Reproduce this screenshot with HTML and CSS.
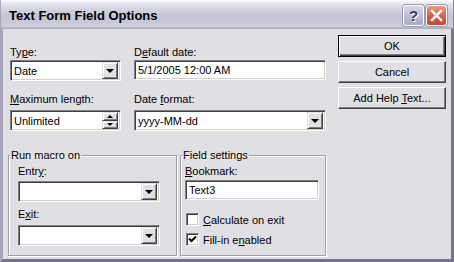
FILE: index.html
```html
<!DOCTYPE html>
<html lang="en">
<head>
    <meta charset="UTF-8">
    <title>Text Form Field Options</title>
    <link rel="stylesheet" href="styles.css">
</head>
<body>
    <div class="window">
        <!-- Title bar -->
        <div class="titlebar">
            <span class="title">Text Form Field Options</span>
            <div class="title-buttons">
                <span class="tb-btn help">?</span>
                <span class="tb-btn close">
                    <svg width="19" height="19" viewBox="0 0 19 19"><path d="M5 5 L14 14 M14 5 L5 14" stroke="#fff" stroke-width="2.4" stroke-linecap="square"/></svg>
                </span>
            </div>
        </div>

        <!-- Dialog body -->
        <div class="client">
            <div class="main">
                <div class="field-row first">
                    <div class="field narrow">
                        <div class="label">Ty<u>p</u>e:</div>
                        <div class="box combo"><span class="value">Date</span><span class="drop"><i class="tri down"></i></span></div>
                    </div>
                    <div class="field wide">
                        <div class="label">D<u>e</u>fault date:</div>
                        <div class="box text"><span class="value">5/1/2005 12:00 AM</span></div>
                    </div>
                </div>
                <div class="field-row second">
                    <div class="field narrow">
                        <div class="label"><u>M</u>aximum length:</div>
                        <div class="box combo"><span class="value">Unlimited</span>
                            <span class="spin">
                                <span class="spin-btn"><i class="tri up small"></i></span>
                                <span class="spin-btn"><i class="tri down small"></i></span>
                            </span>
                        </div>
                    </div>
                    <div class="field wide">
                        <div class="label">Date <u>f</u>ormat:</div>
                        <div class="box combo"><span class="value">yyyy-MM-dd</span><span class="drop"><i class="tri down"></i></span></div>
                    </div>
                </div>

                <div class="groups">
                    <fieldset class="group macro">
                        <legend>Run macro on</legend>
                        <div class="group-body">
                            <div class="label">Entr<u>y</u>:</div>
                            <div class="box combo"><span class="value"></span><span class="drop"><i class="tri down"></i></span></div>
                            <div class="label exit-label">E<u>x</u>it:</div>
                            <div class="box combo"><span class="value"></span><span class="drop"><i class="tri down"></i></span></div>
                        </div>
                    </fieldset>
                    <fieldset class="group settings">
                        <legend>Field settings</legend>
                        <div class="group-body">
                            <div class="label"><u>B</u>ookmark:</div>
                            <div class="box text"><span class="value">Text3</span></div>
                            <div class="check-row first-check">
                                <span class="checkbox"></span>
                                <span><u>C</u>alculate on exit</span>
                            </div>
                            <div class="check-row">
                                <span class="checkbox">
                                    <svg width="9" height="9" viewBox="0 0 9 9"><path d="M1 3.5 L3.5 6 L8 1.5" fill="none" stroke="#000" stroke-width="2"/></svg>
                                </span>
                                <span>Fill-in e<u>n</u>abled</span>
                            </div>
                        </div>
                    </fieldset>
                </div>
            </div>

            <div class="buttons">
                <div class="btn default"><span>OK</span></div>
                <div class="btn"><span>Cancel</span></div>
                <div class="btn"><span>Add Help <u>T</u>ext...</span></div>
            </div>
        </div>
    </div>
</body>
</html>
```

FILE: styles.css
```css
* {
    box-sizing: border-box;
}

body {
    margin: 0;
    font-family: "Liberation Sans", Arial, sans-serif;
    font-size: 11px;
    color: #000;
    background: #e0dfe3;
}

.window {
    width: 454px;
    height: 262px;
    display: flex;
    flex-direction: column;
}

/* Title bar */
.titlebar {
    height: 29px;
    flex: none;
    display: flex;
    align-items: center;
    justify-content: space-between;
    padding: 0 6px 0 8px;
    background: linear-gradient(#fdfdfe 0%, #e6e6ee 12%, #d6d6e2 30%, #c4c4d4 55%, #c8c8d8 78%, #d0d0dc 90%, #a4a4ba 100%);
    border-left: 1px solid #a8a8b8;
    border-right: 1px solid #8a88a4;
}

.title {
    font-weight: bold;
    font-size: 13px;
    margin-top: 1px;
}

.title-buttons {
    display: flex;
    gap: 2px;
    margin-top: 1px;
}

.tb-btn {
    width: 21px;
    height: 21px;
    border-radius: 3px;
    display: flex;
    align-items: center;
    justify-content: center;
    border: 1px solid #fff;
    box-shadow: 0 0 0 1px #9a9ab0;
}

.tb-btn.help {
    background: linear-gradient(#d8d8e6, #a8a8c4);
    font-weight: bold;
    font-size: 15px;
    color: #3c3c58;
    text-shadow: 1px 1px 0 #fff;
}

.tb-btn.close {
    background: linear-gradient(#ec9a88, #d25c46 60%, #c24830);
}

/* Client area */
.client {
    flex: 1;
    display: flex;
    background: #e0dfe3;
    border-left: 3px solid #a6a5bc;
    border-right: 3px solid #75738f;
    border-bottom: 3px solid #75738f;
    padding-left: 5px;
}

.main {
    width: 318px;
    padding-top: 17px;
}

.field-row {
    display: flex;
    gap: 13px;
    margin-left: 2px;
    align-items: flex-start;
}

.field-row.second {
    margin-top: 12px;
}

.field-row.second .label {
    margin-bottom: 4px;
}

.field.narrow {
    width: 111px;
}

.field.wide {
    width: 192px;
}

.label {
    line-height: 13px;
    height: 13px;
    margin-bottom: 1px;
    white-space: nowrap;
}

/* Sunken controls */
.box {
    height: 21px;
    background: #fff;
    border: 1px solid;
    border-color: #808080 #fff #fff #808080;
    box-shadow: inset 1px 1px #404040, inset -1px -1px #d4d0c8;
    display: flex;
    align-items: center;
    padding: 2px;
}

.box.text {
    height: 20px;
}

.box .value {
    flex: 1;
    padding-left: 1px;
    white-space: nowrap;
}

.drop,
.spin-btn {
    background: #e0dfe3;
    border: 1px solid;
    border-color: #e0dfe3 #404040 #404040 #e0dfe3;
    box-shadow: inset 1px 1px #fff, inset -1px -1px #808080;
    display: flex;
    align-items: center;
    justify-content: center;
}

.drop {
    width: 16px;
    height: 17px;
}

.spin {
    width: 16px;
    height: 17px;
    display: flex;
    flex-direction: column;
}

.spin-btn {
    flex: 1;
}

.tri {
    width: 0;
    height: 0;
    border-left: 4px solid transparent;
    border-right: 4px solid transparent;
}

.tri.down {
    border-top: 4px solid #000;
}

.tri.up {
    border-bottom: 4px solid #000;
}

.tri.small {
    border-left-width: 3px;
    border-right-width: 3px;
}

.tri.small.down {
    border-top-width: 3px;
}

.tri.small.up {
    border-bottom-width: 3px;
}

/* Group boxes */
.groups {
    display: flex;
    gap: 3px;
    margin-top: 18px;
}

.group {
    margin: 0;
    padding: 0;
    height: 107px;
    border: 1px solid #a0a0a0;
    box-shadow: inset 1px 1px #fff, 1px 1px #fff;
}

.group legend {
    padding: 0 1px;
    margin-left: 1px;
    line-height: 13px;
}

.group.macro {
    width: 169px;
}

.group.settings {
    width: 146px;
}

.macro .group-body {
    padding: 3px 0 0 9px;
}

.macro .box {
    width: 142px;
}

.macro .label {
    margin-bottom: 3px;
}

.macro .exit-label {
    margin-top: 6px;
    margin-bottom: 4px;
}

.settings .group-body {
    padding: 3px 0 0 4px;
}

.settings .label {
    margin-bottom: 2px;
}

.settings .box {
    width: 134px;
}

.check-row {
    display: flex;
    align-items: center;
    gap: 4px;
    height: 13px;
    margin-top: 7px;
    margin-left: 1px;
}

.check-row.first-check {
    margin-top: 13px;
}

.checkbox {
    width: 13px;
    height: 13px;
    background: #fff;
    border: 1px solid;
    border-color: #808080 #fff #fff #808080;
    box-shadow: inset 1px 1px #404040, inset -1px -1px #d4d0c8;
    display: flex;
    align-items: center;
    justify-content: center;
}

/* Push buttons */
.buttons {
    width: 108px;
    margin-left: 12px;
    padding-top: 6px;
    display: flex;
    flex-direction: column;
    gap: 4px;
}

.btn {
    height: 22px;
    display: flex;
    align-items: center;
    justify-content: center;
    background: #e0dfe3;
    border: 1px solid;
    border-color: #fff #404040 #404040 #fff;
    box-shadow: inset -1px -1px #808080;
    white-space: nowrap;
}

.btn.default {
    border: 1px solid #000;
    box-shadow: inset 1px 1px #fff, inset -1px -1px #404040, inset -2px -2px #808080;
}
```
